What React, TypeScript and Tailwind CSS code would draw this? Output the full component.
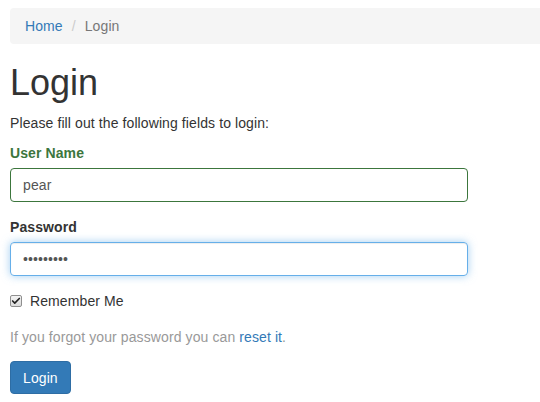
import { Check } from 'lucide-react';

const font = { fontFamily: '"Liberation Sans", Arial, sans-serif' };

export default function App() {
    return (
        <div className="w-[540px] h-[402px] overflow-hidden bg-white text-[14px] leading-[20px] text-[#333] tracking-[0.1px]" style={font}>
            <div className="w-[600px] pl-[10px] pt-[8px]">
                {/* Breadcrumb */}
                <ul className="flex h-[36px] items-center rounded-[4px] bg-[#f5f5f5] px-[15px] mb-[19px]">
                    <li>
                        <a className="text-[#337ab7]">Home</a>
                    </li>
                    <li className="text-[#777] ml-[4px]">
                        <span className="px-[5px] text-[#ccc]">/&nbsp;</span>
                        Login
                    </li>
                </ul>

                <h1 className="text-[36px] leading-[40px] font-medium mb-[10px] tracking-normal">Login</h1>
                <p className="mb-[10px]">Please fill out the following fields to login:</p>

                <form className="w-[458px]">
                    {/* User name */}
                    <div className="mb-[15px]">
                        <label className="block font-bold text-[#3c763d] mb-[5px]">User Name</label>
                        <input
                            type="text"
                            defaultValue="pear"
                            className="block w-full h-[34px] px-[12px] py-[6px] rounded-[4px] border border-[#3c763d] text-[#555] outline-none"
                        />
                    </div>

                    {/* Password */}
                    <div className="mb-[15px]">
                        <label className="block font-bold mb-[5px]">Password</label>
                        <input
                            type="password"
                            defaultValue="*********"
                            className="block w-full h-[34px] px-[12px] py-[6px] rounded-[4px] border border-[#66afe9] text-[#555] outline-none shadow-[inset_0_1px_1px_rgba(0,0,0,0.075),0_0_8px_rgba(102,175,233,0.6)]"
                        />
                    </div>

                    {/* Remember me */}
                    <div className="flex items-center h-[20px]">
                        <span className="flex items-center justify-center w-[12px] h-[12px] rounded-[2px] border border-[#8f8f8f] bg-gradient-to-b from-[#f4f4f4] to-[#dcdcdc] mr-[8px]">
                            <Check className="w-[10px] h-[10px] text-[#222]" strokeWidth={4} />
                        </span>
                        <span>Remember Me</span>
                    </div>

                    <div className="text-[#999] mt-[16px] mb-[14px]">
                        If you forgot your password you can <a className="text-[#337ab7]">reset it</a>.
                    </div>

                    <button
                        type="button"
                        className="h-[33px] px-[12px] rounded-[4px] border border-[#2e6da4] bg-[#337ab7] text-white"
                    >
                        Login
                    </button>
                </form>
            </div>
        </div>
    );
}
